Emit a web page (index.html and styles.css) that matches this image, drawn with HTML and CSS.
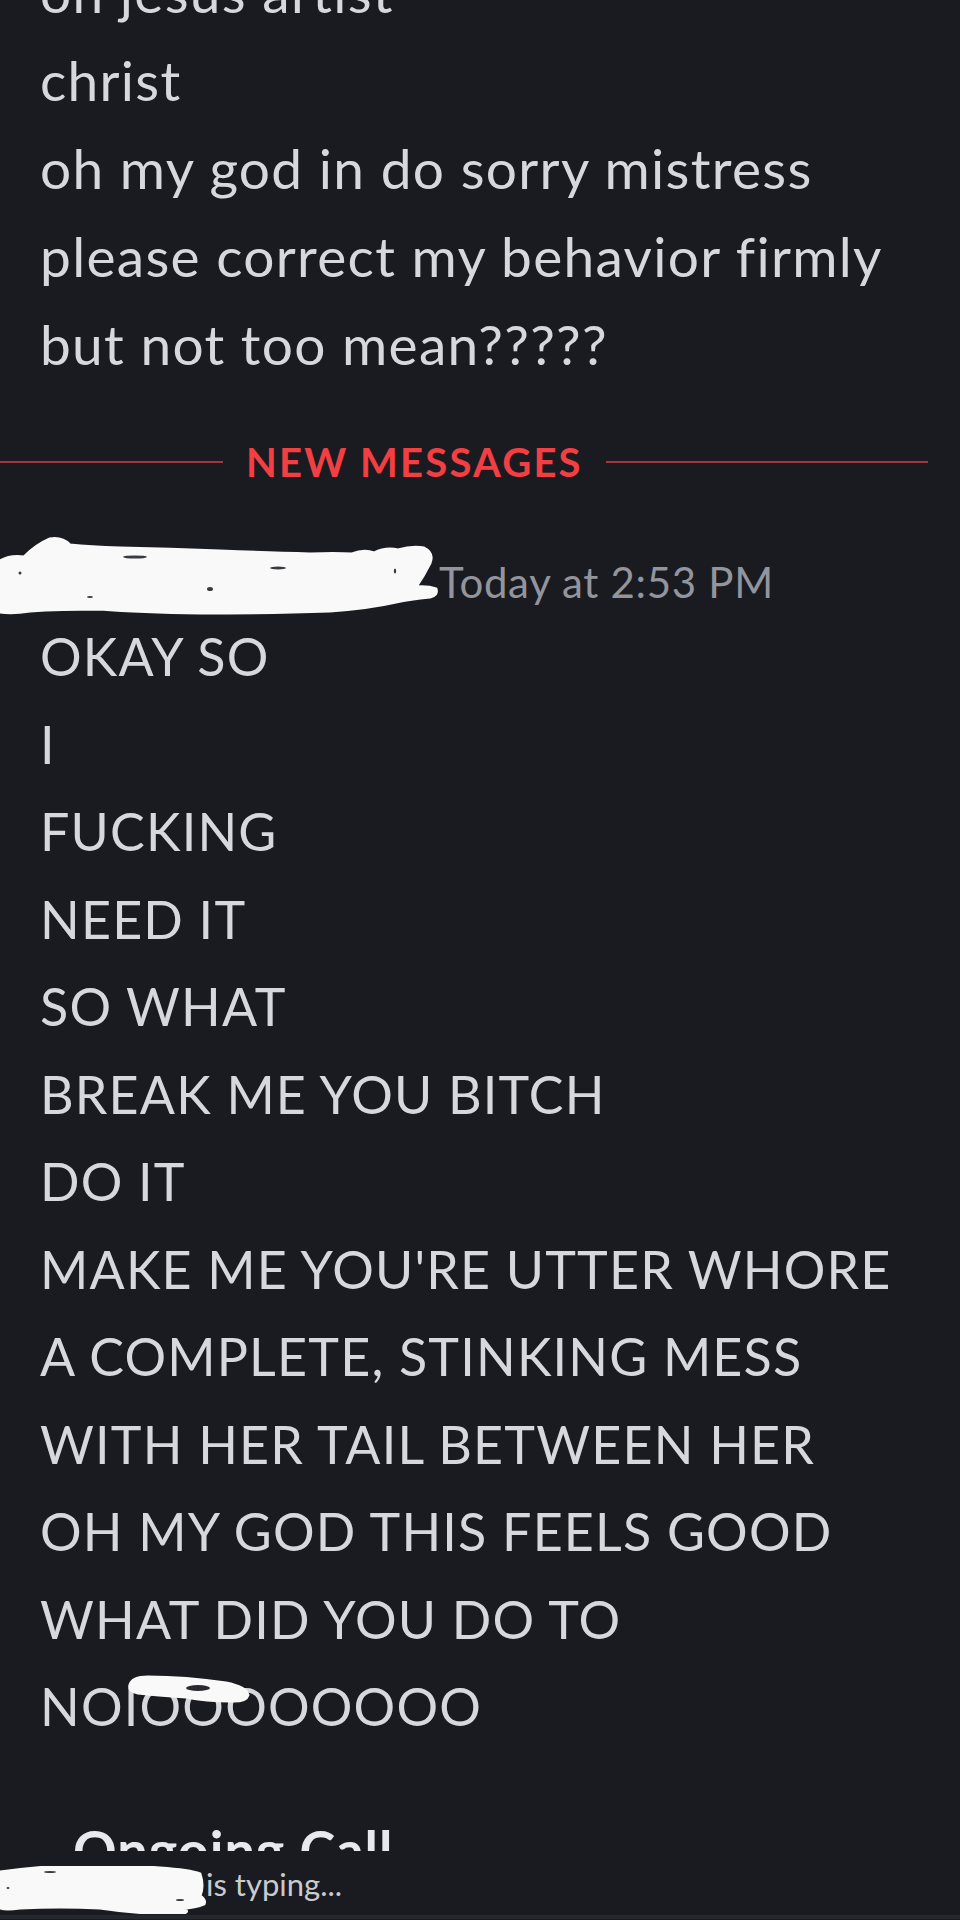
FILE: index.html
```html
<!DOCTYPE html>
<html lang="en">
<head>
<meta charset="utf-8">
<title>Chat</title>
<link rel="stylesheet" href="styles.css">
</head>
<body>
<main class="chat">
  <section class="msg-lines prev">
    <div class="line">oh jesus artist</div>
    <div class="line">christ</div>
    <div class="line">oh my god in do sorry mistress</div>
    <div class="line">please correct my behavior firmly</div>
    <div class="line">but not too mean?????</div>
  </section>

  <div class="divider">
    <span class="rule rule-left"></span>
    <span class="divider-text">NEW MESSAGES</span>
    <span class="rule rule-right"></span>
  </div>

  <header class="msg-header">
    <svg class="name-blob" width="437" height="62" viewBox="0 0 437 62">
      <path class="blob" d="M0 10 Q10 4 24 6 Q36 -6 50 -12 Q62 -14 70 -6 Q90 -4 120 -3 Q170 -2 220 0 Q270 2 310 3 Q335 2 352 3 Q364 -2 374 2 Q386 -4 398 -1 Q412 -5 424 -3 Q434 2 430 12 Q424 24 416 36 Q428 35 436 38 Q438 44 430 46 Q410 48 396 51 Q370 57 330 60 Q270 62 200 62 Q140 61 100 58 Q60 58 30 60 Q12 63 0 61 Z"/>
      <ellipse class="speck" cx="135" cy="6" rx="12" ry="1.6"/>
      <ellipse class="speck" cx="278" cy="17" rx="8" ry="1.4"/>
      <ellipse class="speck" cx="210" cy="38" rx="3" ry="2"/>
      <ellipse class="speck" cx="20" cy="22" rx="1.5" ry="1.5"/>
      <ellipse class="speck" cx="395" cy="20" rx="1.2" ry="2.5"/>
      <ellipse class="speck" cx="90" cy="46" rx="3" ry="1"/>
    </svg>
    <span class="timestamp">Today at 2:53 PM</span>
  </header>

  <section class="msg-lines current">
    <div class="line">OKAY SO</div>
    <div class="line">I</div>
    <div class="line">FUCKING</div>
    <div class="line">NEED IT</div>
    <div class="line">SO WHAT</div>
    <div class="line">BREAK ME YOU BITCH</div>
    <div class="line">DO IT</div>
    <div class="line">MAKE ME YOU'RE UTTER WHORE</div>
    <div class="line">A COMPLETE, STINKING MESS</div>
    <div class="line">WITH HER TAIL BETWEEN HER</div>
    <div class="line">OH MY GOD THIS FEELS GOOD</div>
    <div class="line">WHAT DID YOU DO TO</div>
    <div class="line line-redacted">NOIOOOOOOOO<svg class="text-blob" width="124" height="28" viewBox="0 0 124 28">
        <path class="blob" d="M4 10 Q6 2 22 2 Q60 2 100 8 Q120 12 122 20 Q120 27 104 26 Q80 26 60 22 Q30 20 12 18 Q2 16 4 10 Z"/>
        <ellipse class="hole" cx="72" cy="13" rx="12" ry="3"/>
      </svg></div>
  </section>

  <div class="call-peek">
    <span class="call-title">Ongoing Call</span>
  </div>

  <footer class="typing">
    <svg class="typing-blob" width="206" height="48" viewBox="0 0 206 48">
      <path class="blob" d="M0 6 Q30 2 60 0 Q110 -2 160 2 Q190 4 200 8 Q204 20 200 30 Q206 34 204 38 Q196 42 182 42 Q192 46 180 48 Q140 48 100 42 Q60 40 20 42 Q6 44 0 42 Z"/>
      <ellipse class="speck" cx="50" cy="6" rx="6" ry="1"/>
      <ellipse class="speck" cx="8" cy="22" rx="1.5" ry="1"/>
      <ellipse class="speck" cx="180" cy="34" rx="4" ry="1"/>
    </svg>
    <span class="typing-text">is typing...</span>
  </footer>
  <div class="bottom-edge"></div>
</main>
</body>
</html>
```

FILE: styles.css
```css
html, body {
  margin: 0;
  padding: 0;
  background: #1a1b20;
}

body {
  width: 960px;
  height: 1920px;
  overflow: hidden;
  font-family: Lato, "Noto Sans", "DejaVu Sans", sans-serif;
  color: #d6d8dd;
}

.chat {
  display: flex;
  flex-direction: column;
  height: 1920px;
}

.msg-lines {
  padding-left: 40px;
}

.prev {
  margin-top: -52px;
  font-size: 55px;
  letter-spacing: 1.3px;
  line-height: 88px;
}

.current {
  font-size: 52px;
  letter-spacing: 1.2px;
  line-height: 87.5px;
}

.line {
  white-space: nowrap;
}

.line-redacted {
  position: relative;
}

.text-blob {
  position: absolute;
  left: 86px;
  top: 12px;
}

.blob {
  fill: #f9f9f9;
  stroke: #f9f9f9;
  stroke-width: 3;
  stroke-linejoin: round;
}

.speck {
  fill: #3a3b40;
}

.hole {
  fill: #2a2b30;
}

.divider {
  margin-top: 50px;
  height: 48px;
  display: flex;
  align-items: center;
  padding-right: 32px;
}

.rule {
  height: 2px;
  background: #a6363c;
}

.rule-left {
  width: 223px;
}

.rule-right {
  flex: 1;
}

.divider-text {
  padding: 0 23px;
  font-size: 40px;
  line-height: 48px;
  font-weight: 700;
  letter-spacing: 2.2px;
  color: #f23f43;
}

.msg-header {
  margin-top: 65px;
  height: 62px;
  display: flex;
  align-items: center;
}

.name-blob {
  overflow: visible;
  flex: none;
}

.timestamp {
  margin-left: 2px;
  font-size: 42px;
  letter-spacing: 0.7px;
  line-height: 62px;
  color: #92959d;
}

.call-peek {
  height: 100px;
  overflow: hidden;
  padding-left: 73px;
  box-sizing: border-box;
  padding-top: 69px;
}

.call-title {
  display: block;
  font-size: 54px;
  letter-spacing: 1px;
  line-height: 60px;
  font-weight: 700;
  color: #e8e9ec;
}

.typing {
  height: 64px;
  display: flex;
  align-items: flex-start;
}

.typing-blob {
  flex: none;
  margin-top: 15px;
}

.typing-text {
  margin-top: 5px;
  font-size: 31px;
  line-height: 56px;
  color: #c9cbd0;
}

.bottom-edge {
  height: 4px;
  background: #26272c;
}
```
